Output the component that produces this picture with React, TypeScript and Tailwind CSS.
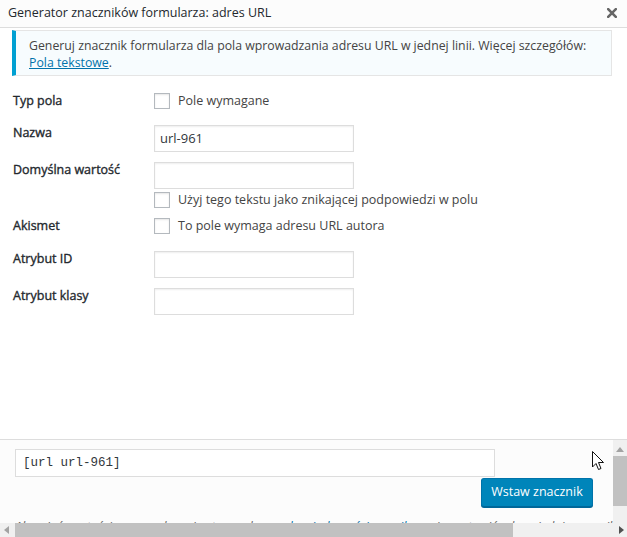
import React from 'react';

const font = { fontFamily: '"Open Sans", "Noto Sans", sans-serif' };

const Checkbox: React.FC = () => (
  <span className="block w-[16px] h-[16px] shrink-0 bg-white border border-[#b4b9be] shadow-[inset_0_1px_2px_rgba(0,0,0,0.1)]" />
);

const TextInput: React.FC<{ value?: string }> = ({ value }) => (
  <div className="w-[200px] h-[27px] mt-[2px] bg-white border border-[#ddd] shadow-[inset_0_1px_2px_rgba(0,0,0,0.07)] px-[5px] flex items-center text-[13px] text-[#32373c]">
    {value}
  </div>
);

const Label: React.FC<{ children: React.ReactNode }> = ({ children }) => (
  <div className="w-[141px] shrink-0 leading-[20px] text-[12.5px] text-[#23282d] [-webkit-text-stroke:0.35px_#23282d]">{children}</div>
);

const App: React.FC = () => {
  return (
    <div className="w-[627px] h-[537px] relative overflow-hidden bg-white flex flex-col" style={font}>
      {/* Header */}
      <div className="h-[28px] shrink-0 bg-[#fcfcfc] border-b border-[#ddd] flex items-center justify-between pl-[8px] pr-[10px]">
        <span className="text-[12.5px] text-[#23282d] leading-none">Generator znaczników formularza: adres URL</span>
        <svg width="10" height="10" viewBox="0 0 10 10" className="mt-[-1px]">
          <path d="M1.2 1.2 L8.8 8.8 M8.8 1.2 L1.2 8.8" stroke="#666" strokeWidth="2.6" strokeLinecap="square" />
        </svg>
      </div>

      {/* Main */}
      <div className="flex-1 flex flex-col">
        <div className="mt-[2px] ml-[12px] w-[600px] bg-[#f7fcfe] border border-[#e5e5e5] border-l-4 border-l-[#00a0d2] pl-[13px] pt-[6px] pb-[4px] text-[12.3px] leading-[17px] text-[#444]">
          <div className="whitespace-nowrap">
            Generuj znacznik formularza dla pola wprowadzania adresu URL w jednej linii. Więcej szczegółów:
          </div>
          <div>
            <span className="text-[#0073aa] underline">Pola tekstowe</span>.
          </div>
        </div>

        <div className="pl-[13px] flex flex-col">
          <div className="mt-[15px] flex items-center h-[20px]">
            <Label>Typ pola</Label>
            <Checkbox />
            <span className="ml-[8px] text-[12.5px] text-[#444]">Pole wymagane</span>
          </div>

          <div className="mt-[12px] flex items-start">
            <Label>Nazwa</Label>
            <TextInput value="url-961" />
          </div>

          <div className="mt-[8px] flex items-start">
            <Label>Domyślna wartość</Label>
            <div className="flex flex-col">
              <TextInput />
              <div className="mt-[3px] flex items-center h-[16px]">
                <Checkbox />
                <span className="ml-[8px] text-[12.5px] text-[#444] whitespace-nowrap">Użyj tego tekstu jako znikającej podpowiedzi w polu</span>
              </div>
            </div>
          </div>

          <div className="mt-[8px] flex items-center h-[20px]">
            <Label>Akismet</Label>
            <Checkbox />
            <span className="ml-[8px] text-[12.5px] text-[#444]">To pole wymaga adresu URL autora</span>
          </div>

          <div className="mt-[13px] flex items-start">
            <Label>Atrybut ID</Label>
            <TextInput />
          </div>

          <div className="mt-[8px] flex items-start">
            <Label>Atrybut klasy</Label>
            <TextInput />
          </div>
        </div>
      </div>

      {/* Insert box */}
      <div className="h-[84px] shrink-0 border-t border-[#ddd] bg-[#fcfcfc] flex">
        <div className="flex-1 overflow-hidden pl-[15px] pt-[9px]">
          <div className="w-[480px] h-[28px] bg-white border border-[#ddd] flex items-center px-[7px] text-[12.5px] text-[#32373c]" style={{ fontFamily: '"Liberation Mono", monospace' }}>
            [url url-961]
          </div>
          <div className="flex justify-end pr-[20px] mt-[1px]">
            <button className="w-[112px] h-[29px] rounded-[3px] bg-[#0085ba] border border-[#0073aa] border-b-[#006799] shadow-[0_1px_0_#006799] text-white text-[12.5px] leading-none">
              Wstaw znacznik
            </button>
          </div>
          <div className="mt-[11px] whitespace-nowrap italic text-[12.5px] text-[#666]">
            Aby użyć wartości wprowadzonej w tym polu w <span className="text-[#0073aa]">polu wiadomości e-mail</span>, musisz wstawić odpowiedni znacznik do pola w zakładce Mail.
          </div>
        </div>
        <div className="w-[14px] shrink-0 bg-[#f0f0f0] flex flex-col items-center">
          <svg width="8" height="5" viewBox="0 0 8 5" className="mt-[7px]">
            <path d="M0 5 L4 0 L8 5 Z" fill="#a3a3a3" />
          </svg>
          <div className="w-[14px] h-[50px] mt-[4px] bg-[#c1c1c1]" />
        </div>
      </div>

      {/* Horizontal scrollbar */}
      <div className="h-[14px] shrink-0 bg-[#f0f0f0] flex items-center">
        <svg width="5" height="8" viewBox="0 0 5 8" className="ml-[4px]">
          <path d="M5 0 L0 4 L5 8 Z" fill="#a3a3a3" />
        </svg>
        <div className="ml-[6px] w-[498px] h-[14px] bg-[#c1c1c1]" />
        <div className="flex-1" />
        <svg width="5" height="8" viewBox="0 0 5 8" className="mr-[3px]">
          <path d="M0 0 L5 4 L0 8 Z" fill="#505050" />
        </svg>
      </div>

      {/* Mouse cursor */}
      <svg width="14" height="22" viewBox="0 0 14 22" className="absolute left-[592px] top-[451px]">
        <path d="M0.5 0.5 L0.5 16 L4 12.5 L6.5 18.5 L9 17.5 L6.5 11.5 L11.5 11.5 Z" fill="white" stroke="#111" strokeWidth="1" strokeLinejoin="round" />
      </svg>
    </div>
  );
};

export default App;
